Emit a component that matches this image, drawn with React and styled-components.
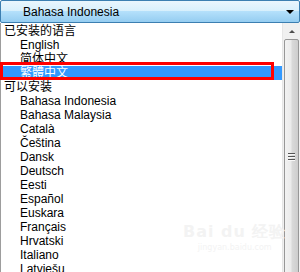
import React from "react";
import styled, { createGlobalStyle } from "styled-components";

const GlobalStyle = createGlobalStyle`
  html, body {
    margin: 0;
    padding: 0;
    background: #ffffff;
    overflow: hidden;
  }
`;

const Frame = styled.div`
  position: relative;
  width: 300px;
  height: 272px;
  overflow: hidden;
  background: #ffffff;
  font-family: "Liberation Sans", "Noto Sans CJK SC", sans-serif;
  font-size: 12px;
  color: #000000;
`;

const Combo = styled.div`
  box-sizing: border-box;
  height: 23px;
  display: flex;
  align-items: center;
  justify-content: space-between;
  padding: 0 5px 0 22px;
  border: 1px solid #3c7fb1;
  border-radius: 2px;
  background: linear-gradient(
    to bottom,
    #eaf6fd 0%,
    #d9f0fc 45%,
    #b4e0fb 50%,
    #95cdf1 100%
  );
`;

const Arrow = styled.span`
  width: 0;
  height: 0;
  border-left: 4px solid transparent;
  border-right: 4px solid transparent;
  border-top: 4px solid #000000;
`;

const Body = styled.div`
  display: flex;
  height: 249px;
`;

const List = styled.div`
  flex: 1;
  border-left: 1px solid #9d9d9d;
  padding-top: 1px;
`;

const Item = styled.div`
  height: 14px;
  line-height: 14px;
  padding-left: ${(p) => (p.$group ? "3px" : "19px")};
  white-space: nowrap;
  background: ${(p) => (p.$selected ? "#3399ff" : "transparent")};
  color: ${(p) => (p.$selected ? "#ffffff" : "#000000")};
`;

const ScrollBar = styled.div`
  width: 17px;
  display: flex;
  flex-direction: column;
  align-items: center;
  background: #f0f0f0;
  border-left: 1px solid #e6e6e6;
`;

const UpButton = styled.div`
  height: 16px;
  width: 100%;
  display: flex;
  align-items: center;
  justify-content: center;
`;

const UpArrow = styled.span`
  width: 0;
  height: 0;
  border-left: 3px solid transparent;
  border-right: 3px solid transparent;
  border-bottom: 3px solid #4d4d4d;
`;

const Thumb = styled.div`
  box-sizing: border-box;
  width: 15px;
  flex: 1;
  margin-bottom: -4px;
  border: 1px solid #979797;
  border-radius: 2px;
  background: linear-gradient(
    to right,
    #f2f2f2 0%,
    #ebebeb 45%,
    #d9d9d9 55%,
    #cdcdcd 100%
  );
  display: flex;
  align-items: center;
  justify-content: center;
  padding-bottom: 2px;
`;

const Grip = styled.div`
  display: flex;
  flex-direction: column;
  gap: 1px;

  span {
    display: block;
    width: 7px;
    height: 1px;
    background: #555555;
    border-bottom: 1px solid #f8f8f8;
  }
`;

const Marker = styled.div`
  position: absolute;
  left: 0;
  top: 62px;
  width: 274px;
  height: 18px;
  box-sizing: border-box;
  border: 3px solid #ff0000;
  pointer-events: none;
`;

const Watermark = styled.div`
  position: absolute;
  left: 183px;
  top: 222px;
  display: flex;
  flex-direction: column;
  align-items: center;
  color: #f3f3f3;
  font-family: "DejaVu Sans", sans-serif;
  pointer-events: none;

  b {
    font-size: 16px;
    font-weight: bold;
    letter-spacing: 1px;
  }

  small {
    font-size: 8px;
  }
`;

const installed = ["English", "简体中文"];
const available = [
  "Bahasa Indonesia",
  "Bahasa Malaysia",
  "Català",
  "Čeština",
  "Dansk",
  "Deutsch",
  "Eesti",
  "Español",
  "Euskara",
  "Français",
  "Hrvatski",
  "Italiano",
  "Latviešu",
];

export default function App() {
  return (
    <>
      <GlobalStyle />
      <Frame>
        <Combo>
          <span>Bahasa Indonesia</span>
          <Arrow />
        </Combo>
        <Body>
          <List>
            <Item $group>已安装的语言</Item>
            {installed.map((name) => (
              <Item key={name}>{name}</Item>
            ))}
            <Item $selected>繁體中文</Item>
            <Item $group>可以安装</Item>
            {available.map((name) => (
              <Item key={name}>{name}</Item>
            ))}
          </List>
          <ScrollBar>
            <UpButton>
              <UpArrow />
            </UpButton>
            <Thumb>
              <Grip>
                <span />
                <span />
                <span />
              </Grip>
            </Thumb>
          </ScrollBar>
        </Body>
        <Watermark>
          <b>Bai du 经验</b>
          <small>jingyan.baidu.com</small>
        </Watermark>
        <Marker />
      </Frame>
    </>
  );
}
